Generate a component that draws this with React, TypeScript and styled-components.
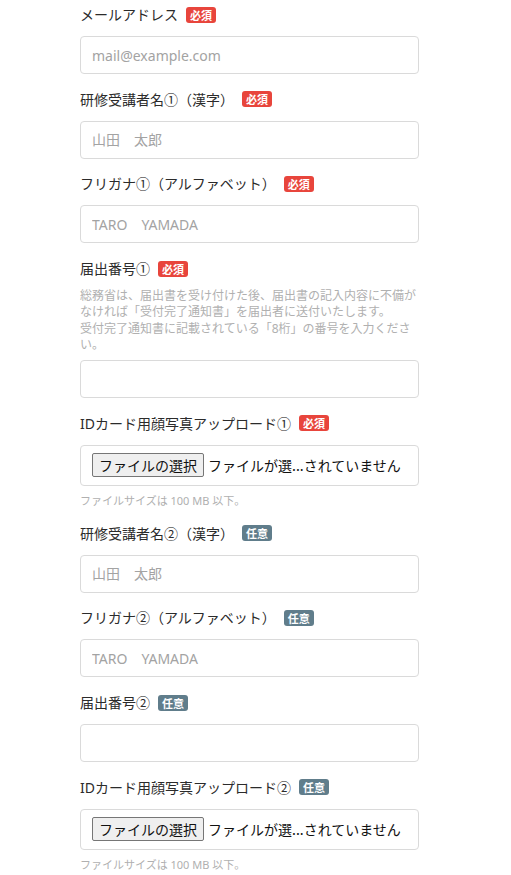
import React from 'react';
import styled, { createGlobalStyle } from 'styled-components';

const GlobalStyle = createGlobalStyle`
	html, body {
		margin: 0;
		padding: 0;
		background: #fff;
	}
	body {
		font-family: "Noto Sans", "Noto Sans CJK JP", sans-serif;
		color: #222;
	}
`;

const Form = styled.form`
	width: 339px;
	padding: 4px 0 0 80px;
`;

const Group = styled.div`
	margin-bottom: 14.7px;
`;

const Label = styled.label`
	display: flex;
	align-items: center;
	height: 21px;
	margin-bottom: 11px;
	font-size: 14px;
	line-height: 21px;
	color: #2b2b2b;
	white-space: nowrap;
`;

const Badge = styled.span<{ $required?: boolean }>`
	display: inline-block;
	margin-left: 8px;
	padding: 0 4px;
	height: 16px;
	line-height: 16px;
	border-radius: 3px;
	font-family: "Noto Sans CJK JP", sans-serif;
	font-size: 11px;
	font-weight: 700;
	color: #fff;
	background: ${(p) => (p.$required ? '#e8453c' : '#607d8b')};
`;

const Input = styled.input`
	display: block;
	box-sizing: border-box;
	width: 100%;
	height: 38px;
	padding: 0 11px;
	border: 1px solid #dadada;
	border-radius: 4px;
	font-family: inherit;
	font-size: 14px;
	color: #222;
	outline: none;

	&::placeholder {
		color: #a3a3a3;
	}
`;

const Help = styled.p<{ $small?: boolean }>`
	margin: ${(p) => (p.$small ? '7px 0 5px' : '-2px 0 7px')};
	font-size: ${(p) => (p.$small ? '11px' : '12px')};
	line-height: ${(p) => (p.$small ? '15px' : '16.3px')};
	color: #b0b0b0;
`;

const FileBox = styled.div`
	display: flex;
	align-items: center;
	box-sizing: border-box;
	height: 41px;
	padding: 0 11px;
	border: 1px solid #dadada;
	border-radius: 4px;
	font-size: 14px;
	white-space: nowrap;
	overflow: hidden;
`;

const FileButton = styled.button`
	box-sizing: border-box;
	height: 24px;
	padding: 0 6px;
	margin-right: 4px;
	border: 1px solid #767676;
	border-radius: 2px;
	background: #efefef;
	font-family: "Noto Sans CJK JP", sans-serif;
	font-size: 14px;
	line-height: 22px;
	color: #111;
`;

const FileName = styled.span`
	font-family: "Noto Sans CJK JP", sans-serif;
	color: #111;
`;

type Field =
	| { kind: 'text'; label: string; required: boolean; placeholder?: string; help?: string[] }
	| { kind: 'file'; label: string; required: boolean };

const fields: Field[] = [
	{ kind: 'text', label: 'メールアドレス', required: true, placeholder: 'mail@example.com' },
	{ kind: 'text', label: '研修受講者名①（漢字）', required: true, placeholder: '山田　太郎' },
	{ kind: 'text', label: 'フリガナ①（アルファベット）', required: true, placeholder: 'TARO　YAMADA' },
	{
		kind: 'text',
		label: '届出番号①',
		required: true,
		help: [
			'総務省は、届出書を受け付けた後、届出書の記入内容に不備がなければ「受付完了通知書」を届出者に送付いたします。',
			'受付完了通知書に記載されている「8桁」の番号を入力ください。',
		],
	},
	{ kind: 'file', label: 'IDカード用顔写真アップロード①', required: true },
	{ kind: 'text', label: '研修受講者名②（漢字）', required: false, placeholder: '山田　太郎' },
	{ kind: 'text', label: 'フリガナ②（アルファベット）', required: false, placeholder: 'TARO　YAMADA' },
	{ kind: 'text', label: '届出番号②', required: false },
	{ kind: 'file', label: 'IDカード用顔写真アップロード②', required: false },
];

export default function App() {
	return (
		<>
			<GlobalStyle />
			<Form>
				{fields.map((field) => (
					<Group key={field.label}>
						<Label>
							{field.label}
							<Badge $required={field.required}>{field.required ? '必須' : '任意'}</Badge>
						</Label>
						{field.kind === 'text' ? (
							<>
								{field.help && (
									<Help>
										{field.help.map((line, i) => (
											<React.Fragment key={i}>
												{i > 0 && <br />}
												{line}
											</React.Fragment>
										))}
									</Help>
								)}
								<Input type="text" placeholder={field.placeholder} />
							</>
						) : (
							<>
								<FileBox>
									<FileButton type="button">ファイルの選択</FileButton>
									<FileName>ファイルが選...されていません</FileName>
								</FileBox>
								<Help $small>ファイルサイズは 100 MB 以下。</Help>
							</>
						)}
					</Group>
				))}
			</Form>
		</>
	);
}
